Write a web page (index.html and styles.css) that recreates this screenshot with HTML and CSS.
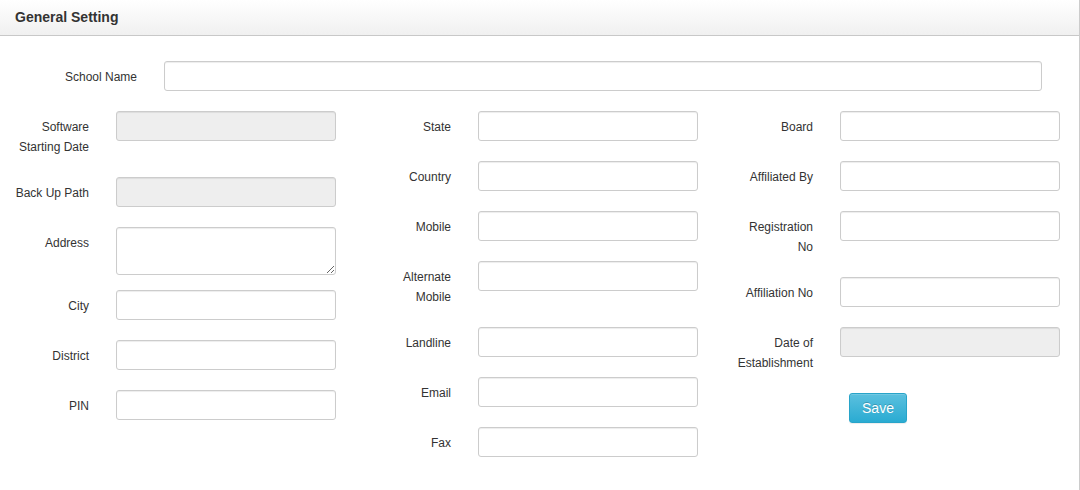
FILE: index.html
```html
<!DOCTYPE html>
<html>
<head>
<meta charset="utf-8">
<title>General Setting</title>
<link rel="stylesheet" href="styles.css">
</head>
<body>
<div class="panel">
  <div class="panel-heading">General Setting</div>
  <div class="panel-body">
    <div class="group wide">
      <label class="wide-label">School Name</label>
      <input class="field wide-field" type="text">
    </div>
    <div class="columns">
      <div class="col">
        <div class="group"><label>Software Starting Date</label><input class="field" type="text" disabled></div>
        <div class="group"><label>Back Up Path</label><input class="field" type="text" disabled></div>
        <div class="group"><label>Address</label><textarea class="field area"></textarea></div>
        <div class="group"><label>City</label><input class="field" type="text"></div>
        <div class="group"><label>District</label><input class="field" type="text"></div>
        <div class="group"><label>PIN</label><input class="field" type="text"></div>
      </div>
      <div class="col">
        <div class="group"><label>State</label><input class="field" type="text"></div>
        <div class="group"><label>Country</label><input class="field" type="text"></div>
        <div class="group"><label>Mobile</label><input class="field" type="text"></div>
        <div class="group"><label>Alternate Mobile</label><input class="field" type="text"></div>
        <div class="group"><label>Landline</label><input class="field" type="text"></div>
        <div class="group"><label>Email</label><input class="field" type="text"></div>
        <div class="group"><label>Fax</label><input class="field" type="text"></div>
      </div>
      <div class="col last">
        <div class="group"><label>Board</label><input class="field" type="text"></div>
        <div class="group"><label>Affiliated By</label><input class="field" type="text"></div>
        <div class="group"><label>Registration No</label><input class="field" type="text"></div>
        <div class="group"><label>Affiliation No</label><input class="field" type="text"></div>
        <div class="group"><label>Date of Establishment</label><input class="field" type="text" disabled></div>
        <div class="group actions"><button class="btn-save" type="button">Save</button></div>
      </div>
    </div>
  </div>
</div>
</body>
</html>
```
FILE: styles.css
```css
* { box-sizing: border-box; }
html, body {
  margin: 0;
  padding: 0;
  background: #fff;
  font-family: "Liberation Sans", Arial, sans-serif;
  color: #333;
}
.panel {
  width: 1080px;
  height: 490px;
  border-right: 1px solid #cccccc;
  overflow: hidden;
}
.panel-heading {
  height: 36px;
  line-height: 35px;
  padding-left: 15px;
  font-size: 14px;
  font-weight: bold;
  color: #333;
  background: linear-gradient(to bottom, #ffffff 0%, #f0f0f0 100%);
  border-bottom: 1px solid #c8c8c8;
}
.panel-body {
  padding-top: 25px;
}
.columns {
  display: flex;
}
.col {
  flex: 0 0 362px;
  display: flex;
  flex-direction: column;
}
.col.last {
  flex: 1 1 auto;
}
.group {
  display: flex;
  align-items: flex-start;
  margin-bottom: 15px;
}
.group label {
  flex: 0 0 78px;
  margin-left: 11px;
  margin-right: 27px;
  padding-top: 6px;
  margin-bottom: 5px;
  font-size: 12px;
  line-height: 20px;
  text-align: right;
  color: #333;
}
.group label.wide-label {
  flex: 0 0 137px;
  margin-left: 0;
}
.field {
  flex: 0 0 220px;
  width: 220px;
  height: 30px;
  margin: 0 0 5px 0;
  padding: 4px 10px;
  font-family: inherit;
  font-size: 12px;
  color: #555;
  background: #fff;
  border: 1px solid #cccccc;
  border-radius: 3px;
  box-shadow: inset 0 1px 1px rgba(0, 0, 0, 0.075);
}
.field:disabled {
  background: #eeeeee;
}
.wide-field {
  flex: 0 0 878px;
  width: 878px;
}
.area {
  height: 48px;
  margin-bottom: 0;
  resize: vertical;
}
.actions {
  padding-left: 125px;
}
.btn-save {
  width: 58px;
  height: 30px;
  padding: 0;
  font-family: inherit;
  font-size: 14px;
  color: #fff;
  text-shadow: 0 -1px 0 rgba(0, 0, 0, 0.2);
  background: linear-gradient(to bottom, #5bc0de 0%, #2aabd2 100%);
  border: 1px solid #28a4c9;
  border-radius: 3px;
  box-shadow: inset 0 1px 0 rgba(255, 255, 255, 0.15), 0 1px 1px rgba(0, 0, 0, 0.075);
  cursor: pointer;
}
```
